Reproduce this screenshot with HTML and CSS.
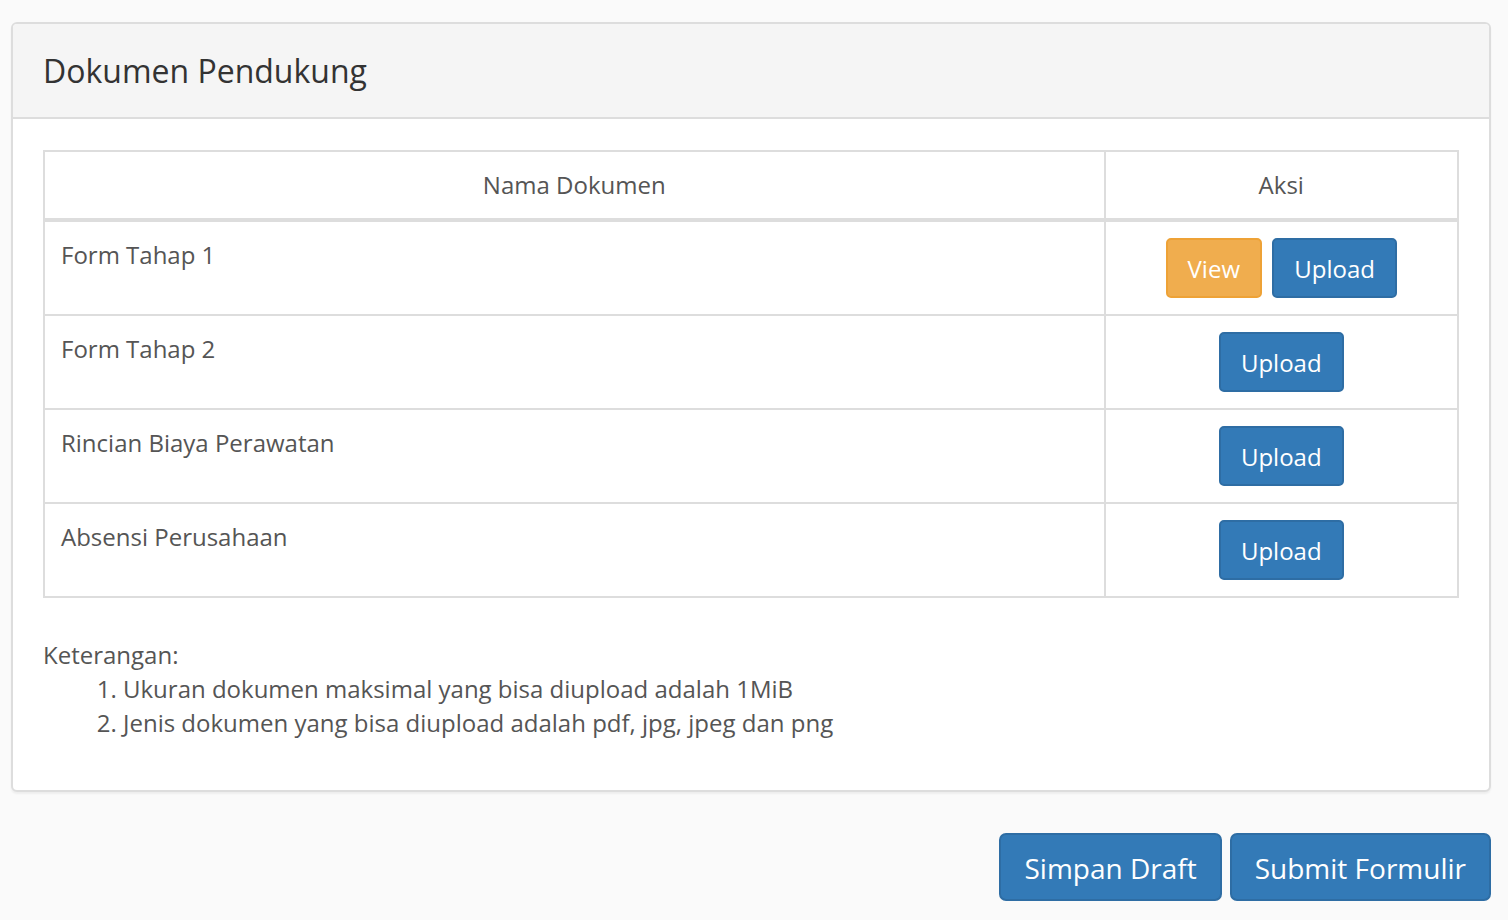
FILE: index.html
```html
<!DOCTYPE html>
<html lang="id">
<head>
<meta charset="utf-8">
<title>Dokumen Pendukung</title>
<link rel="stylesheet" href="styles.css">
</head>
<body>
<div class="page">
  <div class="panel">
    <div class="panel-heading">
      <h3 class="panel-title">Dokumen Pendukung</h3>
    </div>
    <div class="panel-body">
      <table class="doc-table">
        <thead>
          <tr>
            <th class="col-name">Nama Dokumen</th>
            <th class="col-action">Aksi</th>
          </tr>
        </thead>
        <tbody>
          <tr>
            <td>Form Tahap 1</td>
            <td class="action-cell"><button class="btn btn-warning">View</button> <button class="btn btn-primary">Upload</button></td>
          </tr>
          <tr>
            <td>Form Tahap 2</td>
            <td class="action-cell"><button class="btn btn-primary">Upload</button></td>
          </tr>
          <tr>
            <td>Rincian Biaya Perawatan</td>
            <td class="action-cell"><button class="btn btn-primary">Upload</button></td>
          </tr>
          <tr>
            <td>Absensi Perusahaan</td>
            <td class="action-cell"><button class="btn btn-primary">Upload</button></td>
          </tr>
        </tbody>
      </table>
      <div class="notes">
        <div class="notes-title">Keterangan:</div>
        <ol class="notes-list">
          <li>Ukuran dokumen maksimal yang bisa diupload adalah 1MiB</li>
          <li>Jenis dokumen yang bisa diupload adalah pdf, jpg, jpeg dan png</li>
        </ol>
      </div>
    </div>
  </div>
  <div class="form-actions">
    <button class="btn-lg btn-primary">Simpan Draft</button>
    <button class="btn-lg btn-primary">Submit Formulir</button>
  </div>
</div>
</body>
</html>
```

FILE: styles.css
```css
html, body {
  margin: 0;
  padding: 0;
  background: #fafafa;
}

body {
  font-family: "Open Sans", "Liberation Sans", sans-serif;
  color: #555;
  font-size: 24px;
  line-height: 34px;
}

.page {
  padding: 22px 17px 0 11px;
}

.panel {
  background: #fff;
  border: 2px solid #dddddd;
  border-radius: 6px;
  box-shadow: 0 2px 2px rgba(0, 0, 0, 0.05);
  overflow: hidden;
}

.panel-heading {
  background: #f5f5f5;
  border-bottom: 2px solid #dddddd;
  height: 93px;
  display: flex;
  align-items: center;
  padding: 0 30px;
}

.panel-title {
  margin: 0;
  font-size: 32px;
  font-weight: 400;
  line-height: 40px;
  color: #333;
}

.panel-body {
  padding: 31px 30px 30px 30px;
}

.doc-table {
  width: 100%;
  border-collapse: separate;
  border-spacing: 0;
  border-top: 2px solid #dddddd;
  border-left: 2px solid #dddddd;
}

.doc-table th,
.doc-table td {
  border-right: 2px solid #dddddd;
  border-bottom: 2px solid #dddddd;
  padding: 16px 16px;
  vertical-align: top;
  font-size: 24px;
  line-height: 34px;
  color: #555;
}

.doc-table th {
  font-weight: 400;
  text-align: center;
  border-bottom-width: 4px;
}

.doc-table .col-action {
  width: 25%;
}

.doc-table td {
  text-align: left;
  height: 60px;
}

.doc-table td.action-cell {
  text-align: center;
}

.btn {
  font-family: "Open Sans", "Liberation Sans", sans-serif;
  font-size: 24px;
  line-height: 34px;
  height: 60px;
  padding: 12px 20px;
  border-radius: 5px;
  border: 2px solid transparent;
  color: #fff;
  cursor: pointer;
  vertical-align: middle;
  margin: 0 2px;
  box-sizing: border-box;
}

.btn-warning {
  background: #f0ad4e;
  border-color: #eea236;
}

.btn-primary {
  background: #337ab7;
  border-color: #2e6da4;
  color: #fff;
}

.notes {
  margin-top: 40px;
}

.notes-title {
  color: #555;
}

.notes-list {
  margin: 0 0 20px 0;
  padding-left: 80px;
}

.form-actions {
  display: flex;
  justify-content: flex-end;
  gap: 8px;
  margin-top: 41px;
}

.btn-lg {
  font-family: "Open Sans", "Liberation Sans", sans-serif;
  font-size: 28px;
  line-height: 40px;
  height: 68px;
  padding: 13px 23px;
  border-radius: 7px;
  border: 2px solid #2e6da4;
  color: #fff;
  cursor: pointer;
  box-sizing: border-box;
}
```
